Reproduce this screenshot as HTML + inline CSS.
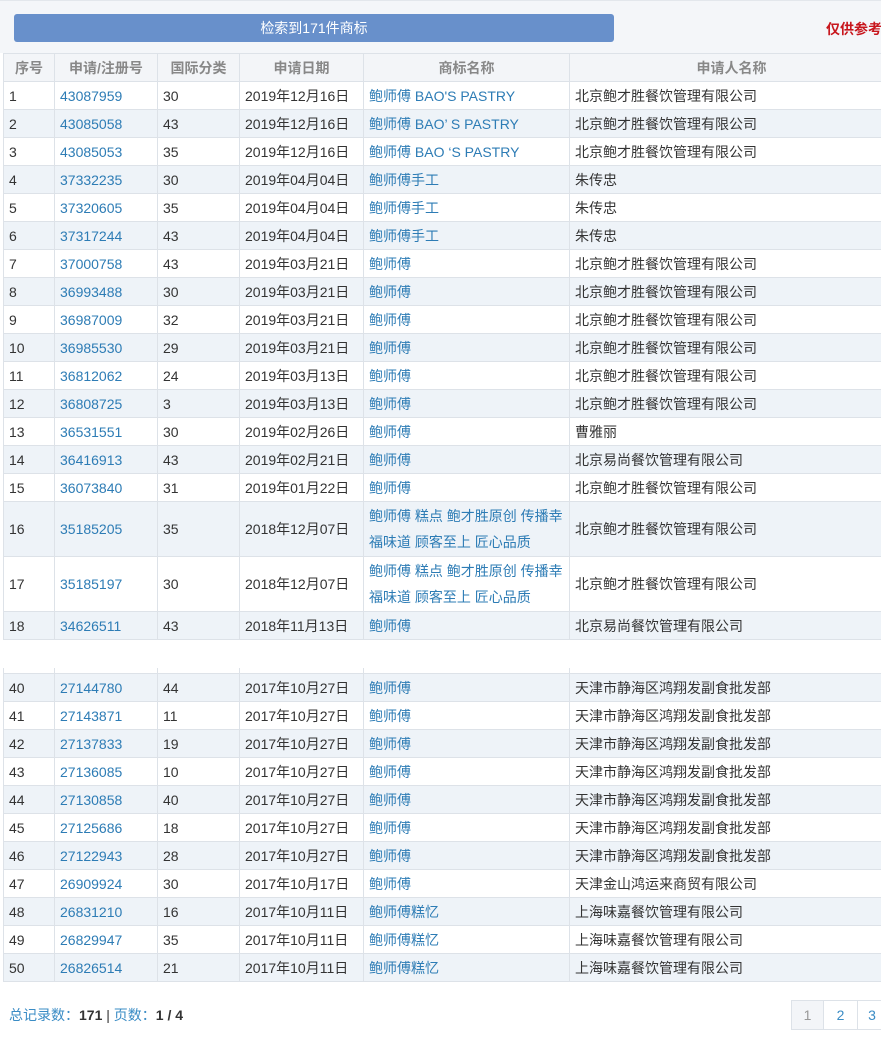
<!DOCTYPE html><html><head><meta charset="utf-8"><style>
body{margin:0;width:881px;height:1037px;overflow:hidden;background:#fff;font-family:"Liberation Sans","Noto Sans CJK SC",sans-serif;font-size:14px;color:#333}
.top{position:absolute;left:0;top:0;width:881px;height:53px;background:#f4f6f9;border-top:1px solid #e3e7ec;box-sizing:border-box}
.btn{position:absolute;left:14px;top:13px;width:600px;height:28px;background:#6890cb;border-radius:3px;color:#fff;text-align:center;line-height:28px;font-size:14px}
.red{position:absolute;left:826px;top:18px;color:#c8161d;font-weight:bold;font-size:14px;white-space:nowrap}
table{position:absolute;left:3px;border-collapse:collapse;table-layout:fixed;width:890px}
td,th{border:1px solid #dde2e8;height:27px;line-height:26px;padding:0 0 0 5px;white-space:nowrap;overflow:hidden;font-weight:normal;text-align:left}
th{color:#888;text-align:center;background:#f3f5f8;height:27px;font-weight:bold;padding:0}
.t1 tr:nth-child(odd) td{background:#eef3f8}
.t2 tr:nth-child(even) td{background:#eef3f8}
.l{color:#2d7cb5}
.tall td{height:54px;line-height:26px}
.sp td{height:5px;line-height:0;font-size:0;border-top:none;background:#fff!important}
.ft{position:absolute;left:9px;top:1005px;color:#3a8cc5;font-size:14px}
.ft b{color:#333}
.pg{position:absolute;top:1000px;height:30px;border:1px solid #dde2e8;box-sizing:border-box;line-height:28px;text-align:center;color:#3a8cc5}
</style></head><body>
<div class="top"><div class="btn">检索到171件商标</div><div class="red">仅供参考</div></div>
<table class="t1" style="top:53px"><colgroup><col style="width:51px"><col style="width:103px"><col style="width:82px"><col style="width:124px"><col style="width:206px"><col style="width:324px"></colgroup>
<tr><th>序号</th><th>申请/注册号</th><th>国际分类</th><th>申请日期</th><th>商标名称</th><th>申请人名称</th></tr>
<tr><td>1</td><td class="l">43087959</td><td>30</td><td>2019年12月16日</td><td class="l">鲍师傅 BAO'S PASTRY</td><td>北京鲍才胜餐饮管理有限公司</td></tr>
<tr><td>2</td><td class="l">43085058</td><td>43</td><td>2019年12月16日</td><td class="l">鲍师傅 BAO’ S PASTRY</td><td>北京鲍才胜餐饮管理有限公司</td></tr>
<tr><td>3</td><td class="l">43085053</td><td>35</td><td>2019年12月16日</td><td class="l">鲍师傅 BAO ‘S PASTRY</td><td>北京鲍才胜餐饮管理有限公司</td></tr>
<tr><td>4</td><td class="l">37332235</td><td>30</td><td>2019年04月04日</td><td class="l">鲍师傅手工</td><td>朱传忠</td></tr>
<tr><td>5</td><td class="l">37320605</td><td>35</td><td>2019年04月04日</td><td class="l">鲍师傅手工</td><td>朱传忠</td></tr>
<tr><td>6</td><td class="l">37317244</td><td>43</td><td>2019年04月04日</td><td class="l">鲍师傅手工</td><td>朱传忠</td></tr>
<tr><td>7</td><td class="l">37000758</td><td>43</td><td>2019年03月21日</td><td class="l">鲍师傅</td><td>北京鲍才胜餐饮管理有限公司</td></tr>
<tr><td>8</td><td class="l">36993488</td><td>30</td><td>2019年03月21日</td><td class="l">鲍师傅</td><td>北京鲍才胜餐饮管理有限公司</td></tr>
<tr><td>9</td><td class="l">36987009</td><td>32</td><td>2019年03月21日</td><td class="l">鲍师傅</td><td>北京鲍才胜餐饮管理有限公司</td></tr>
<tr><td>10</td><td class="l">36985530</td><td>29</td><td>2019年03月21日</td><td class="l">鲍师傅</td><td>北京鲍才胜餐饮管理有限公司</td></tr>
<tr><td>11</td><td class="l">36812062</td><td>24</td><td>2019年03月13日</td><td class="l">鲍师傅</td><td>北京鲍才胜餐饮管理有限公司</td></tr>
<tr><td>12</td><td class="l">36808725</td><td>3</td><td>2019年03月13日</td><td class="l">鲍师傅</td><td>北京鲍才胜餐饮管理有限公司</td></tr>
<tr><td>13</td><td class="l">36531551</td><td>30</td><td>2019年02月26日</td><td class="l">鲍师傅</td><td>曹雅丽</td></tr>
<tr><td>14</td><td class="l">36416913</td><td>43</td><td>2019年02月21日</td><td class="l">鲍师傅</td><td>北京易尚餐饮管理有限公司</td></tr>
<tr><td>15</td><td class="l">36073840</td><td>31</td><td>2019年01月22日</td><td class="l">鲍师傅</td><td>北京鲍才胜餐饮管理有限公司</td></tr>
<tr class="tall"><td>16</td><td class="l">35185205</td><td>35</td><td>2018年12月07日</td><td class="l">鲍师傅 糕点 鲍才胜原创 传播幸<br>福味道 顾客至上 匠心品质</td><td>北京鲍才胜餐饮管理有限公司</td></tr>
<tr class="tall"><td>17</td><td class="l">35185197</td><td>30</td><td>2018年12月07日</td><td class="l">鲍师傅 糕点 鲍才胜原创 传播幸<br>福味道 顾客至上 匠心品质</td><td>北京鲍才胜餐饮管理有限公司</td></tr>
<tr><td>18</td><td class="l">34626511</td><td>43</td><td>2018年11月13日</td><td class="l">鲍师傅</td><td>北京易尚餐饮管理有限公司</td></tr>
</table>
<table class="t2" style="top:668px"><colgroup><col style="width:51px"><col style="width:103px"><col style="width:82px"><col style="width:124px"><col style="width:206px"><col style="width:324px"></colgroup>
<tr class="sp"><td></td><td></td><td></td><td></td><td></td><td></td></tr>
<tr><td>40</td><td class="l">27144780</td><td>44</td><td>2017年10月27日</td><td class="l">鲍师傅</td><td>天津市静海区鸿翔发副食批发部</td></tr>
<tr><td>41</td><td class="l">27143871</td><td>11</td><td>2017年10月27日</td><td class="l">鲍师傅</td><td>天津市静海区鸿翔发副食批发部</td></tr>
<tr><td>42</td><td class="l">27137833</td><td>19</td><td>2017年10月27日</td><td class="l">鲍师傅</td><td>天津市静海区鸿翔发副食批发部</td></tr>
<tr><td>43</td><td class="l">27136085</td><td>10</td><td>2017年10月27日</td><td class="l">鲍师傅</td><td>天津市静海区鸿翔发副食批发部</td></tr>
<tr><td>44</td><td class="l">27130858</td><td>40</td><td>2017年10月27日</td><td class="l">鲍师傅</td><td>天津市静海区鸿翔发副食批发部</td></tr>
<tr><td>45</td><td class="l">27125686</td><td>18</td><td>2017年10月27日</td><td class="l">鲍师傅</td><td>天津市静海区鸿翔发副食批发部</td></tr>
<tr><td>46</td><td class="l">27122943</td><td>28</td><td>2017年10月27日</td><td class="l">鲍师傅</td><td>天津市静海区鸿翔发副食批发部</td></tr>
<tr><td>47</td><td class="l">26909924</td><td>30</td><td>2017年10月17日</td><td class="l">鲍师傅</td><td>天津金山鸿运来商贸有限公司</td></tr>
<tr><td>48</td><td class="l">26831210</td><td>16</td><td>2017年10月11日</td><td class="l">鲍师傅糕忆</td><td>上海味嘉餐饮管理有限公司</td></tr>
<tr><td>49</td><td class="l">26829947</td><td>35</td><td>2017年10月11日</td><td class="l">鲍师傅糕忆</td><td>上海味嘉餐饮管理有限公司</td></tr>
<tr><td>50</td><td class="l">26826514</td><td>21</td><td>2017年10月11日</td><td class="l">鲍师傅糕忆</td><td>上海味嘉餐饮管理有限公司</td></tr>
</table>
<div class="ft">总记录数：<b>171</b> <span style="color:#333">|</span> 页数：<b>1 / 4</b></div>
<div class="pg" style="left:791px;width:33px;background:#f3f5f8;color:#999">1</div>
<div class="pg" style="left:823px;width:35px">2</div>
<div class="pg" style="left:857px;width:30px">3</div>
</body></html>
